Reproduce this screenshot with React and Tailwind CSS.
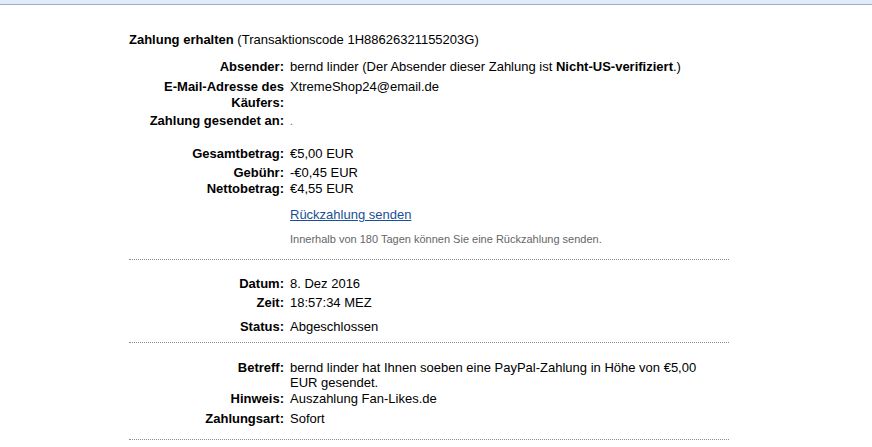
const Row = ({ label, children, className = "" }) => (
  <div className={`grid grid-cols-[155px_1fr] gap-x-[6px] ${className}`}>
    <div className="text-right font-bold text-black">{label}</div>
    <div className="pr-[28px] text-black">{children}</div>
  </div>
);

const Divider = ({ className = "" }) => (
  <div className={`border-t border-dotted border-[#8a8a8a] ${className}`} />
);

export default function App() {
  return (
    <div className="min-h-screen bg-white font-['Liberation_Sans',Arial,sans-serif] text-[13px] leading-[16px] text-black">
      <div className="h-[4px] border-b border-[#9cb0c9] bg-[#e1eaf8] box-content" />

      <div className="w-[600px] ml-[129px]">
        <h1 className="mt-[27px] text-[13px] leading-[16px]">
          <span className="font-bold">Zahlung erhalten</span> (Transaktionscode 1H88626321155203G)
        </h1>

        <Row label="Absender:" className="mt-[11px]">
          bernd linder (Der Absender dieser Zahlung ist <span className="font-bold">Nicht-US-verifiziert</span>.)
        </Row>
        <Row label="E-Mail-Adresse des Käufers:" className="mt-[4px]">
          XtremeShop24@email.de
        </Row>
        <Row label="Zahlung gesendet an:" className="mt-[2px]">
          <span className="text-[10px] text-[#555]">.</span>
        </Row>

        <Row label="Gesamtbetrag:" className="mt-[16px]">€5,00 EUR</Row>
        <Row label="Gebühr:" className="mt-[3px]">-€0,45 EUR</Row>
        <Row label="Nettobetrag:">€4,55 EUR</Row>
        <Row label="" className="mt-[10px]">
          <a href="#" className="text-[#1a4f94] underline">Rückzahlung senden</a>
        </Row>
        <Row label="" className="mt-[9px] text-[11px] leading-[14px]">
          <span className="text-[#666]">Innerhalb von 180 Tagen können Sie eine Rückzahlung senden.</span>
        </Row>

        <Divider className="mt-[13px]" />

        <Row label="Datum:" className="mt-[16px]">8. Dez 2016</Row>
        <Row label="Zeit:" className="mt-[3px]">18:57:34 MEZ</Row>
        <Row label="Status:" className="mt-[8px]">Abgeschlossen</Row>

        <Divider className="mt-[7px]" />

        <Row label="Betreff:" className="mt-[17px] leading-[15px]">
          bernd linder hat Ihnen soeben eine PayPal-Zahlung in Höhe von €5,00 EUR gesendet.
        </Row>
        <Row label="Hinweis:" className="mt-[1px]">Auszahlung Fan-Likes.de</Row>
        <Row label="Zahlungsart:" className="mt-[4px]">Sofort</Row>

        <Divider className="mt-[12px]" />
      </div>
    </div>
  );
}
